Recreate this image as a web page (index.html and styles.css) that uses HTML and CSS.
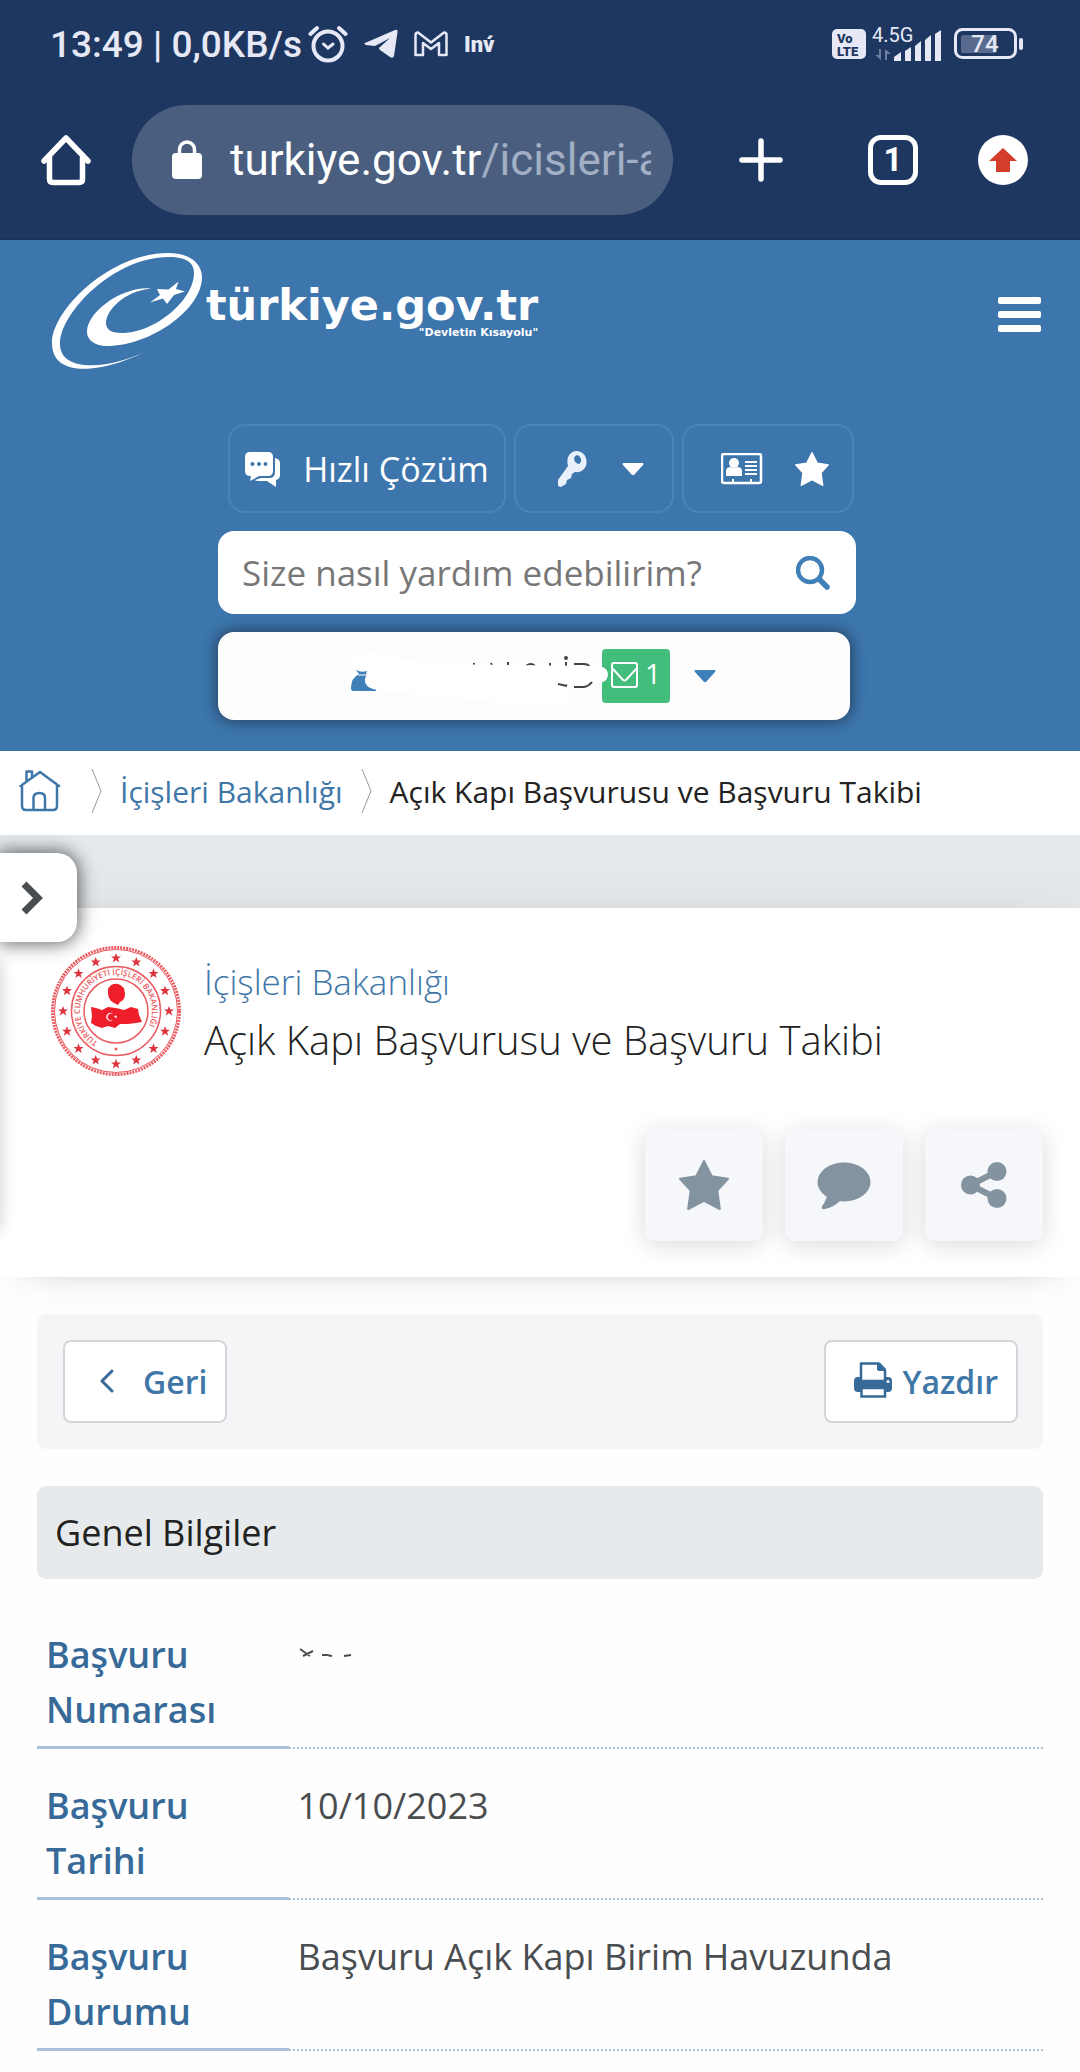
FILE: index.html
```html
<!DOCTYPE html>
<html lang="tr">
<head>
    <meta charset="UTF-8">
    <meta name="viewport" content="width=device-width, initial-scale=1.0">
    <title>Açık Kapı Başvurusu ve Başvuru Takibi</title>
    <link rel="stylesheet" href="styles.css">
</head>
<body>
    <svg class="sprite" aria-hidden="true">
        <symbol id="star" viewBox="0 0 49 49">
            <path d="M24.5 1 32 16 48 18.500 37.500 30 40 48 24.500 40 9 48 11.500 30 1 18.500 17 16Z" fill="currentColor" stroke="currentColor" stroke-width="2" stroke-linejoin="round"/>
        </symbol>
        <symbol id="caret" viewBox="0 0 22 12">
            <path d="M1 0H21Q22 1 21 2L12 12H10L1 2Q0 1 1 0Z" fill="currentColor"/>
        </symbol>
    </svg>

    <div class="phone-top">
        <div class="status-bar">
            <span class="clock">13:49 | 0,0KB/s</span>
            <svg class="alarm" width="40" height="38" viewBox="0 0 40 38" fill="none" stroke="#e6e9f5" stroke-width="4" stroke-linecap="round">
                <circle cx="20" cy="21" r="14.500"/>
                <path d="M2.500 9 9 3M37.500 9 31 3"/>
                <path d="M15.500 19 20 23 25 19" stroke-width="3"/>
            </svg>
            <svg width="34" height="30" viewBox="0 0 34 30">
                <path d="M1 14 31 1Q34 0 33.500 3L30 27Q29 30 26 28L16 21Q14 19 16 18L26 9 11 17 2 16Q-1 15 1 14Z" fill="#e6e9f5"/>
            </svg>
            <svg width="34" height="26" viewBox="0 0 34 26" fill="none" stroke="#e6e9f5" stroke-width="2.500" stroke-linejoin="round">
                <path d="M1.500 4Q1.500 1.500 4 1.500L17 11.500 30 1.500Q32.500 1.500 32.500 4V24H25V12L17 18 9 12V24H1.500Z"/>
            </svg>
            <span class="inv">Inv́</span>
            <span class="status-right">
                <svg width="34" height="30" viewBox="0 0 34 30">
                    <rect width="34" height="30" rx="5" fill="#e6e9f5"/>
                    <text x="5" y="14" class="volte">Vo</text>
                    <text x="5" y="27" class="volte">LTE</text>
                </svg>
                <svg width="76" height="44" viewBox="0 -4 76 44" fill="#e6e9f5">
                    <text x="0" y="16" class="net">4.5G</text>
                    <path d="M9 23V34L3 29H7V23ZM13 34V23L19 28H15V34Z" opacity=".4"/>
                    <path d="M22 35V31L29 26V35ZM33 35V25L39 21V35ZM43 35V20L49 15V35ZM53 35V14L59 9V35ZM63 35V8L69 4V35Z"/>
                </svg>
                <svg width="70" height="32" viewBox="0 0 70 32">
                    <rect x="1.500" y="1.500" width="60" height="28" rx="7" fill="none" stroke="#e6e9f5" stroke-width="3"/>
                    <rect x="7" y="7" width="36" height="18" rx="2" fill="#586b8e"/>
                    <rect x="65" y="10" width="4" height="12" rx="2" fill="#e6e9f5"/>
                    <text x="31" y="24" text-anchor="middle" class="charge">74</text>
                </svg>
            </span>
        </div>
        <div class="browser-bar">
            <button class="icon-btn" aria-label="Ana sayfa">
                <svg width="50" height="52" viewBox="0 0 50 52" fill="none" stroke="#fff" stroke-width="5.500" stroke-linejoin="round" stroke-linecap="round">
                    <path d="M3 27 25 4 47 27M8.500 24V45Q8.500 48.500 12 48.500H38Q41.500 48.500 41.500 45V24"/>
                </svg>
            </button>
            <div class="url">
                <svg width="30" height="40" viewBox="0 0 30 40">
                    <rect y="13" width="30" height="26" rx="4" fill="#fff"/>
                    <path d="M7.500 15V9.500A7.500 7.500 0 0 1 22.500 9.500V15" fill="none" stroke="#fff" stroke-width="3.500"/>
                </svg>
                <span class="address">turkiye.gov.tr<span>/icisleri-a</span></span>
            </div>
            <div class="browser-actions">
                <button class="icon-btn new-tab" aria-label="Yeni sekme">
                    <svg width="44" height="44" viewBox="0 0 44 44" stroke="#fff" stroke-width="5.500" stroke-linecap="round">
                        <path d="M3 22H41M22 3V41"/>
                    </svg>
                </button>
                <button class="tabs">1</button>
                <button class="icon-btn" aria-label="Güncelle">
                    <svg width="50" height="50" viewBox="0 0 50 50">
                        <circle cx="25" cy="25" r="25" fill="#fff"/>
                        <path d="M25 13 39 26H32V37H18V26H11Z" fill="#d33d2c"/>
                    </svg>
                </button>
            </div>
        </div>
    </div>

    <header class="header">
        <div class="brand-row">
            <a href="#" class="brand">
                <svg width="156" height="122" viewBox="50 250 156 122" fill="#fff">
                    <path d="M155 346C120 368 52 385 52 343C52 310 110 253 168 253C195 253 202 268 202 277C202 310 150 346 107 346C95 346 87 340 87 332C87 312 122 286 151 288.500C125 291 106 310 106 323C106 330 112 333 122 333C155 333 194 300 194 273C194 260 182 257 168 257C115 257 60 312 60 344C60 376 120 368 155 346Z"/>
                    <path d="M178.500 281.500 176 289 185 291.500 174 295 167 304 163 298.500 150 302.500 160 295 157 289 168.500 289.500Z"/>
                </svg>
                <span class="brand-text">
                    <strong>türkiye.gov.tr</strong>
                    <small>"Devletin Kısayolu"</small>
                </span>
            </a>
            <button class="menu-btn" aria-label="Menü"><span></span><span></span><span></span></button>
        </div>

        <div class="tools">
            <div class="quick">
                <button class="quick-btn quick-help">
                    <svg width="36" height="40" viewBox="0 -3 36 40" fill="#fff">
                        <path d="M5 0H23Q28 0 28 5V19Q28 24 23 24H14L5 29 6 24H5Q0 24 0 19V5Q0 0 5 0Z"/>
                        <path d="M30 6Q35 7 35 11V23Q35 27 31 28V35L22 29H13Q11 29 10 28L16 26H24Q30 26 30 20Z"/>
                        <g fill="#3c76ad"><circle cx="7.500" cy="12" r="2"/><circle cx="14" cy="12" r="2"/><circle cx="20.500" cy="12" r="2"/></g>
                    </svg>
                    Hızlı Çözüm
                </button>
                <button class="quick-btn quick-key" aria-label="Giriş">
                    <svg width="30" height="36" viewBox="0 0 30 36" fill="#e8f1fb">
                        <path fill-rule="evenodd" d="M18 0C25 0 29 5 28.500 12C28 18 23 22 17 21L14 23 13 27 9 29 8 33 3 36 0 35V29L10 15C8 7 11 1 18 0ZM19 4C14 6 16 12 21 13C25 11 23 5 19 4Z"/>
                    </svg>
                    <svg class="caret"><use href="#caret"/></svg>
                </button>
                <button class="quick-btn quick-fav" aria-label="Kısayollar">
                    <svg width="42" height="32" viewBox="0 0 42 32">
                        <rect x="1" y="1" width="39" height="29" rx="2" fill="none" stroke="#fff" stroke-width="2.500"/>
                        <circle cx="13" cy="10" r="5" fill="#fff"/>
                        <path d="M5 23V18Q5 14 10 14Q13 16 16 14Q21 14 21 18V23Z" fill="#fff"/>
                        <path d="M24 9H36M24 13H36M24 17H36M24 21H36M12 30V26M30 30V26" stroke="#fff" stroke-width="2"/>
                    </svg>
                    <svg width="34" height="34"><use href="#star"/></svg>
                </button>
            </div>
            <form class="search">
                <input type="text" placeholder="Size nasıl yardım edebilirim?" aria-label="Arama">
                <button class="icon-btn" type="button" aria-label="Ara">
                    <svg width="34" height="34" viewBox="0 0 34 34" fill="none" stroke="#3f80b9" stroke-linecap="round">
                        <circle cx="14" cy="14" r="12" stroke-width="4.500"/>
                        <path d="M24 24 31 31" stroke-width="5.500"/>
                    </svg>
                </button>
            </form>
            <button class="user" aria-label="Hesabım">
                <svg class="user-name" width="258" height="64" viewBox="350 644 258 64">
                    <path d="M356 670Q361 673 367 671L366 674Q378 682 376 691H353Q351 691 351 688Q351 678 359 674Z" fill="#3f80b9"/>
                    <path d="M358 675H367" stroke="#fff"/>
                    <g stroke="#444" fill="none" stroke-width="2">
                        <path d="M473 664H475M491 663 492 666M508 662V667M526 666Q531 662 535 666M550 663V667M566 662V667M574 664H584Q588 664 590 667"/>
                        <path d="M558 684 567 685"/>
                    </g>
                    <circle cx="566" cy="658" r="2" fill="#444"/>
                    <path d="M350 657Q351 649 362 650Q390 658 430 664L595 666Q608 666 608 675Q607 683 598 683L566 684Q572 694 566 706Q500 704 440 696L378 690Q364 688 365 679Q366 674 371 671L354 668Q350 664 350 657Z" fill="#fff"/>
                    <path d="M558 684 567 686M574 687H584Q589 686 592 682" fill="none" stroke="#444" stroke-width="2"/>
                </svg>
                <span class="mail">
                    <svg width="27" height="26" viewBox="0 0 27 26" fill="none" stroke="#fff" stroke-width="2">
                        <rect x="1" y="1" width="25" height="24" rx="2"/>
                        <path d="M1 6 12 18Q13.500 19 15 18L26 6"/>
                    </svg>
                    1
                </span>
                <svg class="caret"><use href="#caret"/></svg>
            </button>
        </div>
    </header>

    <nav class="breadcrumb">
        <a href="#" class="home" aria-label="Ana Sayfa">
            <svg width="42" height="42" viewBox="0 0 42 42" fill="none" stroke="#3f77a8" stroke-width="2.500" stroke-linejoin="round" stroke-linecap="round">
                <path d="M1.500 16 21 2 40 16M3 15V36Q3 40 7 40H34Q38 40 38 36V15M7.500 11V1.500H13V7M14.500 40V28Q14.500 23 20.500 23Q26 23 26 28V40"/>
            </svg>
        </a>
        <svg class="sep" width="11" height="46" viewBox="0 0 11 46"><path d="M1 1 10 23 1 45"/></svg>
        <a href="#">İçişleri Bakanlığı</a>
        <svg class="sep" width="11" height="46" viewBox="0 0 11 46"><path d="M1 1 10 23 1 45"/></svg>
        <span>Açık Kapı Başvurusu ve Başvuru Takibi</span>
    </nav>

    <main class="content">
        <div class="side-menu"></div>
        <button class="side-toggle" aria-label="Menüyü aç">
            <svg width="22" height="34" viewBox="0 0 22 34" fill="none" stroke="#4a4d50" stroke-width="7">
                <path d="M3 3 17 17 3 31"/>
            </svg>
        </button>

        <section class="title-card">
            <div class="title-row">
                <svg width="132" height="132" viewBox="-66 -66 132 132">
                    <defs>
                        <path id="ring" d="M-18 31A36 36 0 1 1 18 31"/>
                        <path id="mini" d="M0-5 1.400-1.600 5-1.600 2.100.800 3.200 4.500 0 2.200-3.200 4.500-2.100.800-5-1.600-1.400-1.600Z"/>
                    </defs>
                    <g fill="none" stroke="#ea5a60">
                        <circle r="63.500" stroke-width="3" stroke-dasharray="2 1"/>
                        <circle r="61.500" stroke-width="1"/>
                        <circle r="44.500" stroke-width="1.500"/>
                        <circle r="32" stroke-width="1.500"/>
                    </g>
                    <g fill="#dd3540">
                        <use href="#mini" transform="translate(0 -53)"/>
                        <use href="#mini" transform="translate(20.300 -49)"/>
                        <use href="#mini" transform="translate(37.500 -37.500)"/>
                        <use href="#mini" transform="translate(49 -20.300)"/>
                        <use href="#mini" transform="translate(53 0)"/>
                        <use href="#mini" transform="translate(49 20.300)"/>
                        <use href="#mini" transform="translate(37.500 37.500)"/>
                        <use href="#mini" transform="translate(20.300 49)"/>
                        <use href="#mini" transform="translate(0 53)"/>
                        <use href="#mini" transform="translate(-20.300 49)"/>
                        <use href="#mini" transform="translate(-37.500 37.500)"/>
                        <use href="#mini" transform="translate(-49 20.300)"/>
                        <use href="#mini" transform="translate(-53 0)"/>
                        <use href="#mini" transform="translate(-49 -20.300)"/>
                        <use href="#mini" transform="translate(-37.500 -37.500)"/>
                        <use href="#mini" transform="translate(-20.300 -49)"/>
                    </g>
                    <circle cy="38" r="1.500" fill="#ea5a60"/>
                    <text class="ring-text"><textPath href="#ring">TÜRKİYE CUMHURİYETİ İÇİŞLERİ BAKANLIĞI</textPath></text>
                    <path d="M-8-22Q-5-28 2-27Q9-25 9-17Q9-11 4-9L2-6-2-8Q-9-11-8-22Z" fill="#ee1f2b"/>
                    <path d="M-25-4-20-3-14-1-8-4 0-3 8-1 15-4 22-2 23 4 26 11 20 12 12 13 4 13-1 17-8 15-14 17-20 15-25 12-24 5Z" fill="#ee1f2b"/>
                    <path d="M-3 3A4 4 0 1 0-3 9A3.500 3.500 0 1 1-3 3ZM0 4 1 7-2 6Z" fill="#fff"/>
                </svg>
                <h1><a href="#">İçişleri Bakanlığı</a>Açık Kapı Başvurusu ve Başvuru Takibi</h1>
            </div>
            <div class="actions">
                <button aria-label="Favori"><svg width="50" height="50"><use href="#star"/></svg></button>
                <button aria-label="Yorum">
                    <svg width="54" height="50" viewBox="0 0 54 50" fill="currentColor">
                        <ellipse cx="27" cy="22" rx="26.500" ry="19.500"/>
                        <path d="M10 36Q8 43 5 46Q4 50 8 49Q17 47 23 41Z"/>
                    </svg>
                </button>
                <button aria-label="Paylaş">
                    <svg width="46" height="48" viewBox="0 0 46 48" fill="currentColor">
                        <circle cx="9.500" cy="24" r="9.500"/><circle cx="36" cy="10.500" r="9.500"/><circle cx="36" cy="37.500" r="9.500"/>
                        <path d="M36 10.500 9.500 24 36 37.500" fill="none" stroke="currentColor" stroke-width="6"/>
                    </svg>
                </button>
            </div>
        </section>

        <div class="toolbar">
            <button class="tool-btn tool-back">
                <svg width="16" height="26" viewBox="0 0 16 26" fill="none" stroke="#376a98" stroke-width="3" stroke-linecap="round" stroke-linejoin="round">
                    <path d="M13 2 3 12 13 22"/>
                </svg>
                Geri
            </button>
            <button class="tool-btn tool-print">
                <svg width="38" height="40" viewBox="0 0 38 40" fill="#376a98">
                    <rect y="15" width="38" height="15" rx="4"/>
                    <path d="M7 19V1.500H25L31 8V19Z" fill="#fff" stroke="#376a98" stroke-width="2.500" stroke-linejoin="round"/>
                    <path d="M23 1H26L32 7V9H25Q23 9 23 7Z"/>
                    <rect x="5" y="18" width="28" height="7"/>
                    <rect x="7.500" y="26" width="23.500" height="8.500" fill="#fff" stroke="#376a98" stroke-width="2.500"/>
                    <circle cx="34" cy="19.500" r="1.500" fill="#fff"/>
                </svg>
                Yazdır
            </button>
        </div>

        <section>
            <h2>Genel Bilgiler</h2>
            <table class="info">
                <tr>
                    <th scope="row">Başvuru Numarası</th>
                    <td>
                        <svg width="60" height="12" viewBox="0 0 60 12" fill="none" stroke="#4a4d50" stroke-width="2">
                            <path d="M2 3 12 10M5 10 15 5M24 9H29L34 10M46 10 53 9"/>
                        </svg>
                    </td>
                </tr>
                <tr>
                    <th scope="row">Başvuru Tarihi</th>
                    <td>10/10/2023</td>
                </tr>
                <tr>
                    <th scope="row">Başvuru Durumu</th>
                    <td>Başvuru Açık Kapı Birim Havuzunda</td>
                </tr>
            </table>
        </section>
    </main>
</body>
</html>
```
FILE: styles.css
```css
* {
    box-sizing: border-box;
}
body {
    margin: 0;
    background: #fefefe;
    color: #222;
    font-family: 'Open Sans', 'Noto Sans', sans-serif;
    font-size: 36px;
}
button {
    font: inherit;
    color: inherit;
    border: none;
    background: none;
    padding: 0;
    cursor: pointer;
}
svg {
    display: block;
    flex: none;
}
a {
    color: #3f77a8;
    text-decoration: none;
}
.sprite {
    position: absolute;
    width: 0;
    height: 0;
}
.caret {
    width: 22px;
    height: 12px;
}
.icon-btn {
    display: flex;
    justify-content: center;
    align-items: center;
}

/* phone status bar and browser bar */
.phone-top {
    background: #1d3761;
    border-bottom: 2px solid #1a3156;
    font-family: Roboto, sans-serif;
}
.status-bar {
    display: flex;
    align-items: center;
    gap: 16px;
    height: 88px;
    padding: 0 56px 0 50px;
    color: #e6e9f5;
}
.clock {
    font-size: 37px;
    font-weight: 500;
}
.alarm {
    margin-left: -10px;
}
.inv {
    font-size: 22px;
    font-weight: 900;
}
.status-right {
    display: flex;
    align-items: center;
    gap: 6px;
    margin-left: auto;
}
.volte {
    font-size: 13px;
    font-weight: 900;
    fill: #1d3761;
}
.net {
    font-size: 20px;
}
.charge {
    font-size: 24px;
    font-weight: 500;
    fill: #e6e9f5;
}
.browser-bar {
    display: flex;
    align-items: center;
    gap: 41px;
    padding: 17px 52px 23px 41px;
}
.url {
    display: flex;
    align-items: center;
    gap: 28px;
    flex: 1;
    min-width: 0;
    height: 110px;
    padding: 0 22px 0 40px;
    border-radius: 55px;
    background: #4a5e7f;
}
.address {
    flex: 1;
    overflow: hidden;
    white-space: nowrap;
    font-size: 44px;
    color: #fff;
}
.address span {
    color: #a3afc4;
}
.browser-actions {
    display: flex;
    align-items: center;
    gap: 60px;
}
.new-tab {
    width: 94px;
}
.tabs {
    width: 50px;
    height: 50px;
    border: 5px solid #fff;
    border-radius: 13px;
    color: #fff;
    font-size: 33px;
    font-weight: 700;
    line-height: 40px;
}

/* site header */
.header {
    background: #3c76ad;
    padding-bottom: 31px;
}
.brand-row {
    display: flex;
    justify-content: space-between;
    align-items: flex-start;
    height: 184px;
    padding: 10px 39px 0 50px;
}
.brand {
    display: flex;
    align-items: center;
    color: #fff;
    font-family: 'DejaVu Sans', sans-serif;
    font-weight: 700;
}
.brand-text {
    display: flex;
    flex-direction: column;
    align-items: flex-end;
}
.brand-text strong {
    font-size: 43px;
    line-height: 44px;
}
.brand-text small {
    font-size: 11px;
    line-height: 12px;
}
.menu-btn {
    display: flex;
    flex-direction: column;
    justify-content: space-between;
    width: 43px;
    height: 35px;
    margin-top: 47px;
}
.menu-btn span {
    width: 100%;
    height: 7px;
    border-radius: 2px;
    background: #fff;
}
.tools {
    display: flex;
    flex-direction: column;
    gap: 18px;
    padding: 0 224px 0 218px;
}
.quick {
    display: flex;
    gap: 8px;
    padding-left: 10px;
}
.quick-btn {
    display: flex;
    justify-content: center;
    align-items: center;
    height: 89px;
    border: 2px solid #4c83b7;
    border-radius: 17px;
    color: #fff;
    font-size: 34px;
}
.quick-help {
    gap: 22px;
    width: 278px;
}
.quick-key {
    gap: 34px;
    width: 160px;
    padding-left: 14px;
}
.quick-fav {
    gap: 32px;
    width: 172px;
    padding-left: 14px;
}
.search {
    display: flex;
    align-items: center;
    height: 83px;
    padding: 0 26px 0 24px;
    border-radius: 16px;
    background: #fff;
}
.search input {
    flex: 1;
    min-width: 0;
    padding: 0;
    border: none;
    outline: none;
    background: none;
    font: inherit;
    font-size: 35px;
}
.search input::placeholder {
    color: #777;
}
.user {
    display: flex;
    align-items: center;
    height: 88px;
    margin-right: 6px;
    padding-left: 132px;
    border-radius: 16px;
    background: #fdfdfd;
    box-shadow: 0 0 14px 2px rgba(30, 45, 65, 0.7);
    color: #3f80b9;
}
.user-name {
    position: relative;
    z-index: 1;
}
.mail {
    display: flex;
    justify-content: center;
    gap: 7px;
    height: 54px;
    width: 68px;
    margin: 0 24px 0 -6px;
    padding-top: 13px;
    border-radius: 4px;
    background: #42bd7c;
    color: #fff;
    font-size: 28px;
    line-height: 22px;
}

/* breadcrumb */
.breadcrumb {
    display: flex;
    align-items: center;
    gap: 18px;
    height: 84px;
    padding: 0 19px 4px;
    background: #fff;
    font-size: 30px;
    white-space: nowrap;
}
.home {
    width: 54px;
}
.sep {
    fill: none;
    stroke: #999;
}

/* page content */
.content {
    position: relative;
    padding-top: 73px;
    background: linear-gradient(#e6eaed, #e2e6e9 73px, #fefefe 73px);
}
.side-menu {
    position: absolute;
    left: -20px;
    top: 125px;
    width: 20px;
    height: 270px;
    box-shadow: 0 0 16px rgba(0, 0, 0, 0.2);
    z-index: 1;
}
.side-toggle {
    position: absolute;
    left: 0;
    top: 18px;
    z-index: 2;
    width: 77px;
    height: 89px;
    padding-left: 21px;
    border-radius: 0 20px 20px 0;
    background: #fff;
    box-shadow: 0 0 18px 2px rgba(0, 0, 0, 0.6);
}
.title-card {
    padding: 37px 37px 36px 50px;
    background: #fff;
    box-shadow: 0 6px 40px -30px rgba(0, 0, 0, 0.7);
}
.title-row {
    display: flex;
    align-items: center;
    gap: 22px;
}
.ring-text {
    font-size: 8px;
    font-weight: 600;
    fill: #ea5a60;
}
h1 {
    margin: 0;
    color: #222;
    font-size: 40px;
    font-weight: 300;
    line-height: 58px;
}
h1 a {
    display: block;
    font-size: 35px;
}
.actions {
    display: flex;
    justify-content: flex-end;
    gap: 22px;
    margin-top: 52px;
}
.actions button {
    display: flex;
    justify-content: center;
    align-items: center;
    width: 118px;
    height: 112px;
    border-radius: 10px;
    background: #f5f7fa;
    box-shadow: 0 4px 24px rgba(0, 0, 0, 0.15);
    color: #8393a0;
}
.toolbar {
    display: flex;
    justify-content: space-between;
    margin: 37px;
    padding: 26px 25px 26px 26px;
    border-radius: 9px;
    background: #f4f5f7;
}
.tool-btn {
    display: flex;
    align-items: center;
    height: 83px;
    border: 2px solid #d3d5d8;
    border-radius: 8px;
    background: #fff;
    color: #3f77a8;
    font-size: 32px;
    font-weight: 600;
}
.tool-back {
    gap: 28px;
    padding: 0 18px 0 34px;
}
.tool-print {
    gap: 11px;
    padding: 0 18px 0 28px;
}
h2 {
    margin: 0 37px 19px;
    padding: 0 18px;
    border-radius: 9px;
    background: #e6eaed;
    font-size: 36px;
    font-weight: 400;
    line-height: 93px;
}
.info {
    width: calc(100% - 74px);
    margin: 0 37px;
    border-spacing: 0;
}
.info th,
.info td {
    padding: 29px 9px 9px;
    line-height: 55px;
    text-align: left;
    vertical-align: top;
}
.info th {
    width: 25%;
    border-bottom: 3px solid #a9c2d8;
    color: #376a98;
    font-weight: 600;
}
.info td {
    border-bottom: 2px dotted #a9c2d8;
    color: #4a4d50;
}
.info td svg {
    margin-top: 19px;
}
```
